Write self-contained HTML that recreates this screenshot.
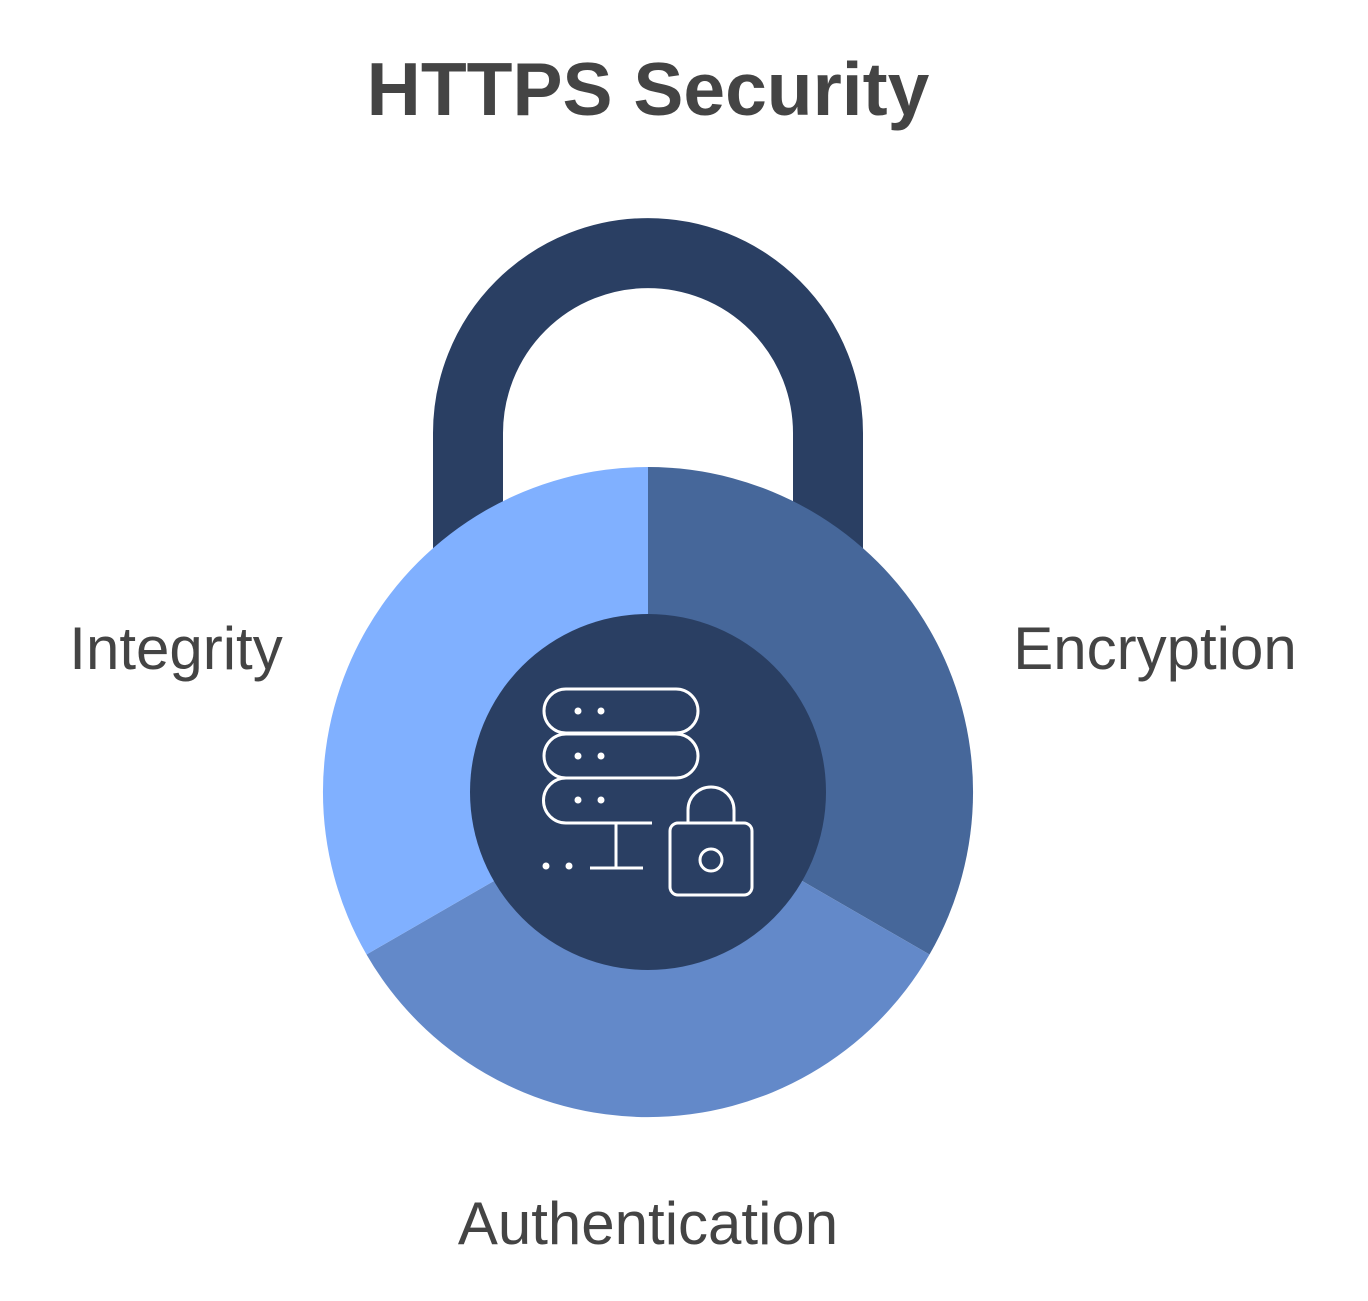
<!DOCTYPE html>
<html><head><meta charset="utf-8"><style>
body{margin:0;background:#fff;width:1368px;height:1296px;overflow:hidden;font-family:"Liberation Sans",sans-serif}
</style></head><body>
<svg width="1368" height="1296" viewBox="0 0 1368 1296" xmlns="http://www.w3.org/2000/svg">
<text x="648" y="115" text-anchor="middle" font-family="Liberation Sans" font-weight="bold" font-size="75" fill="#444">HTTPS Security</text>
<path d="M468 560 V433 A180 180 0 0 1 828 433 V560" fill="none" stroke="#2a3f63" stroke-width="70"/>
<g transform="translate(648 792)">
<path d="M0 0 L0 -325 A325 325 0 0 1 281.5 162.5 Z" fill="#46679a"/>
<path d="M0 0 L281.5 162.5 A325 325 0 0 1 -281.5 162.5 Z" fill="#6389c9"/>
<path d="M0 0 L-281.5 162.5 A325 325 0 0 1 0 -325 Z" fill="#80b0ff"/>
<circle r="178" fill="#2a3f63"/>
</g>
<g fill="none" stroke="#fff" stroke-width="3">
<rect x="544" y="689" width="154" height="44" rx="22"/>
<rect x="544" y="734" width="154" height="44" rx="22"/>
<path d="M652 823 H566 A22.5 22.5 0 0 1 566 778"/>
<path d="M616 823 V868 M590 868 H643"/>
<rect x="670" y="823" width="82" height="72" rx="8"/>
<path d="M688 823 V810 A23 23 0 0 1 734 810 V823"/>
<circle cx="711" cy="860" r="11"/>
</g>
<g fill="#fff">
<circle cx="578" cy="711" r="3.5"/><circle cx="601" cy="711" r="3.5"/>
<circle cx="578" cy="756" r="3.5"/><circle cx="601" cy="756" r="3.5"/>
<circle cx="578" cy="800" r="3.5"/><circle cx="601" cy="800" r="3.5"/>
<circle cx="546" cy="866" r="3.5"/><circle cx="569" cy="866" r="3.5"/>
</g>
<g font-family="Liberation Sans" font-size="60" fill="#444">
<text x="176" y="669" text-anchor="middle">Integrity</text>
<text x="1155" y="669" text-anchor="middle">Encryption</text>
<text x="648" y="1244" text-anchor="middle">Authentication</text>
</g>
</svg>
</body></html>
